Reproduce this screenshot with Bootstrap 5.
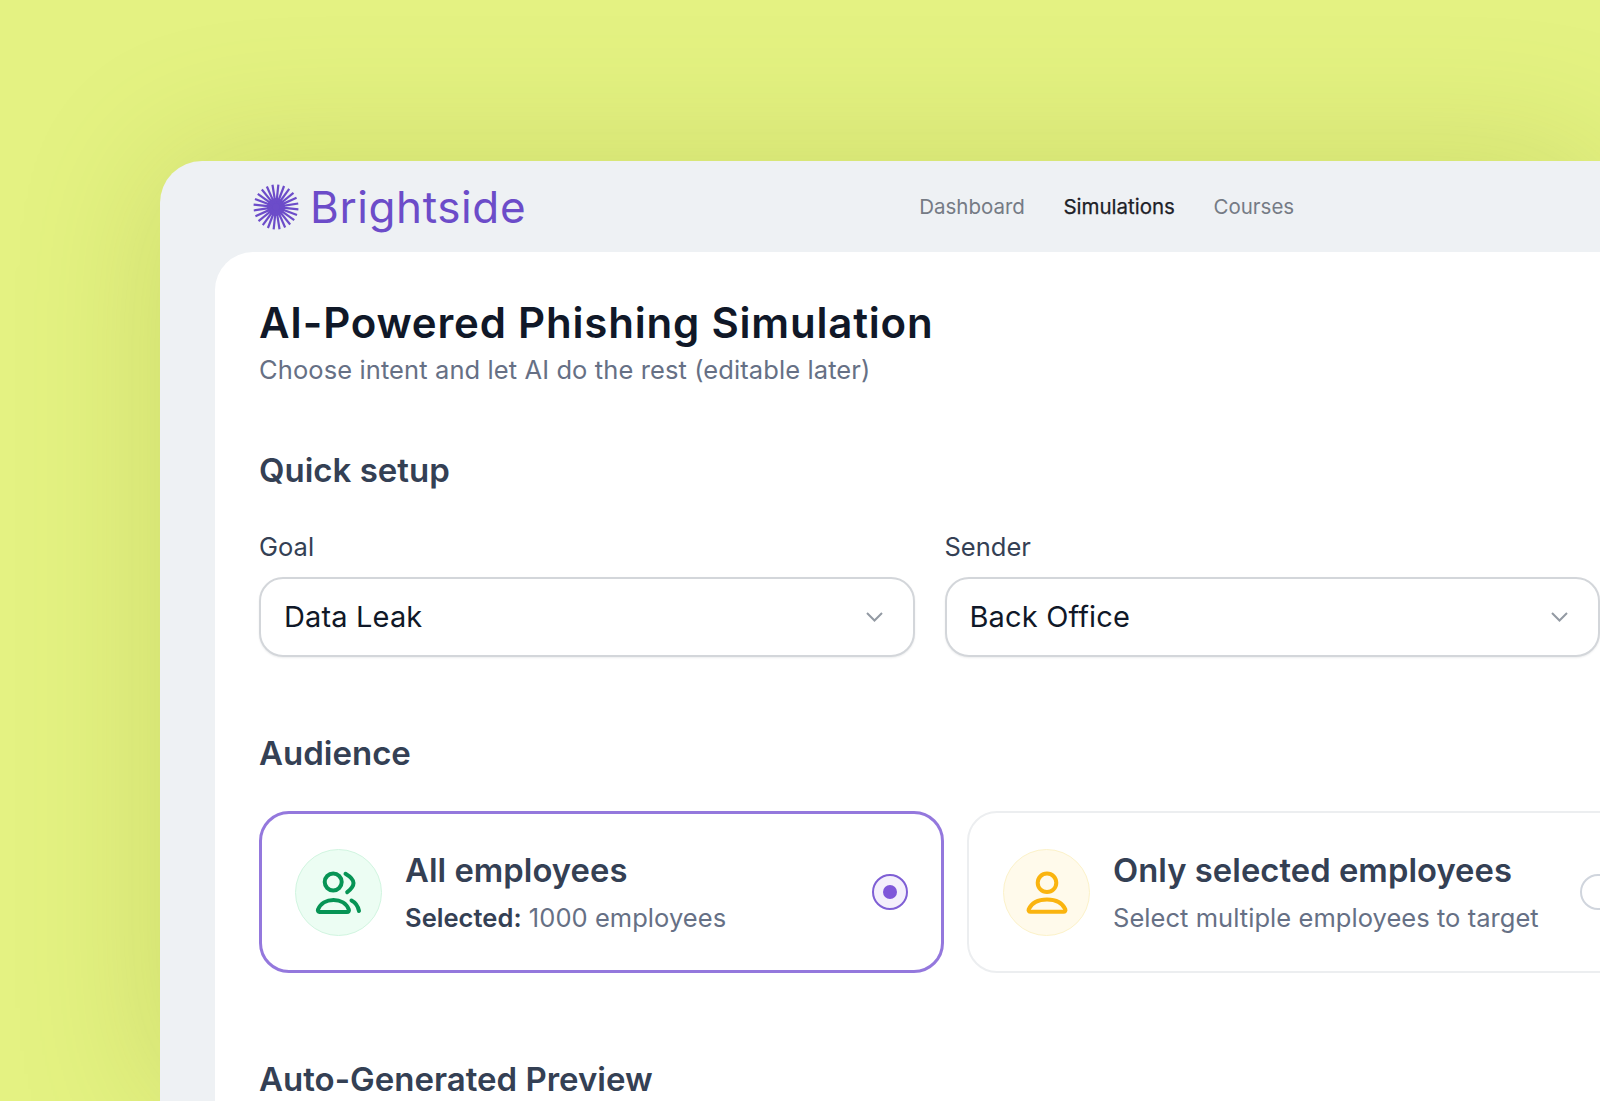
<!DOCTYPE html>
<html lang="en">
<head>
<meta charset="UTF-8">
<title>Brightside</title>
<link rel="stylesheet" href="https://cdn.jsdelivr.net/npm/bootstrap@5.3.2/dist/css/bootstrap.min.css">
<style>
    html, body { height: 100%; overflow: hidden; }
    body { background: #e4f282; font-family: Inter, "Liberation Sans", sans-serif; color: #344054; }
    .shell { margin: 161px 0 0 160px; width: 1440px; height: 940px; background: #eef1f4; border-top-left-radius: 42px; box-shadow: 0 0 150px rgba(110, 125, 20, .2); }
    .topbar { height: 91px; padding-left: 93px; }
    .brand-name { font-size: 44px; color: #6c4cc9; line-height: 1; margin-left: 11px; letter-spacing: .6px; }
    .top-links { margin-left: 393px; gap: 38.5px; padding-top: 2px; }
    .top-links a { font-size: 20.5px; color: #757b85; text-decoration: none; }
    .top-links a.active { color: #1d2127; -webkit-text-stroke: .25px #1d2127; }
    .panel { margin-left: 55px; height: 849px; background: #fff; border-top-left-radius: 38px; padding: 45px 0 0 44px; overflow: hidden; }
    .page-title { font-size: 42px; font-weight: 600; color: #101828; line-height: 52px; margin: 0; letter-spacing: .8px; }
    .page-sub { font-size: 25.5px; color: #667085; line-height: 34px; letter-spacing: .1px; margin-top: 4px; }
    .sec-title { font-size: 33px; font-weight: 600; color: #344054; line-height: 40px; margin: 0; }
    .sec-quick { margin-top: 63px; }
    .sec-audience { margin-top: 76px; }
    .sec-preview { margin-top: 86px; }
    .field-row { width: 1341px; gap: 30px; margin-top: 40px; }
    .field-row > div { flex: 1 1 0; }
    .field-label { font-size: 25.5px; color: #344054; line-height: 34px; margin-bottom: 13px; }
    .field-select { height: 80px; font-size: 29px; color: #101828; border: 2px solid #d3d6da; border-radius: 24px; padding: 0 60px 0 23px; box-shadow: 0 1px 2px rgba(16, 24, 40, .08); letter-spacing: .15px;
        background-image: url("data:image/svg+xml,%3csvg xmlns='http://www.w3.org/2000/svg' viewBox='0 0 17 10'%3e%3cpath fill='none' stroke='%23939aa3' stroke-width='2' d='M1 1l7.500 7.500L16 1'/%3e%3c/svg%3e");
        background-size: 17px 10px; background-position: right 30px center; }
    .opt-row { width: 1393px; gap: 23px; margin-top: 38px; }
    .opt-card { flex: 1 1 0; height: 162px; padding: 0 34px; border: 2px solid #eceef0; border-radius: 30px; gap: 23px; }
    .opt-card.selected { border: 3px solid #9478dd; padding: 0 33px; }
    .opt-icon { width: 87px; height: 87px; flex: none; }
    .opt-icon.green { background: #ecfdf3; border: 1px solid #d1f5e0; }
    .opt-icon.yellow { background: #fffaeb; border: 1px solid #fcf2c9; }
    .opt-title { font-size: 32.75px; font-weight: 600; color: #344054; line-height: 42px; letter-spacing: .05px; }
    .opt-sub { font-size: 25.5px; color: #667085; line-height: 34px; margin-top: 10px; letter-spacing: .05px; }
    .opt-sub strong { font-weight: 600; color: #344054; }
    .opt-radio { width: 36px; height: 36px; flex: none; border: 2px solid #d0d5dd; background: #fff; }
    .opt-radio.on { border-color: #7f5fd5; background: #f4effc; }
    .opt-radio.on span { width: 14px; height: 14px; background: #7f56d9; }
</style>
</head>
<body>
<div class="shell">
    <div class="topbar d-flex align-items-center">
        <svg id="logo" width="46" height="46" viewBox="-23 -23 46 46"><circle r="9" fill="#6c4cc9"/></svg>
        <span class="brand-name">Brightside</span>
        <nav class="top-links d-flex">
            <a href="#">Dashboard</a>
            <a href="#" class="active">Simulations</a>
            <a href="#">Courses</a>
        </nav>
    </div>
    <div class="panel">
        <h1 class="page-title">AI-Powered Phishing Simulation</h1>
        <div class="page-sub">Choose intent and let AI do the rest (editable later)</div>

        <h2 class="sec-title sec-quick">Quick setup</h2>
        <div class="field-row d-flex">
            <div>
                <label class="field-label d-block">Goal</label>
                <select class="form-select field-select"><option>Data Leak</option></select>
            </div>
            <div>
                <label class="field-label d-block">Sender</label>
                <select class="form-select field-select"><option>Back Office</option></select>
            </div>
        </div>

        <h2 class="sec-title sec-audience">Audience</h2>
        <div class="opt-row d-flex">
            <div class="opt-card selected d-flex align-items-center">
                <div class="opt-icon green rounded-circle d-flex align-items-center justify-content-center">
                    <svg width="50" height="50" viewBox="0 0 50 50" fill="none" stroke="#079455" stroke-width="4" stroke-linecap="round" stroke-linejoin="round">
                        <circle cx="19.200" cy="15" r="8.500"/>
                        <path d="M31.500 6.800c5 3 8 6 8 9.300s-2.500 6.300-6.300 9.100"/>
                        <path d="M5.500 45h27.500c1.500 0 2.300-1.200 1.800-2.500C32.500 36.500 26.500 33 19.500 33S6.500 36.500 4 42.500c-.5 1.300.3 2.500 1.500 2.500z"/>
                        <path d="M37.500 33.500c3.500 1.800 6.500 5.500 7.500 10.500"/>
                    </svg>
                </div>
                <div class="flex-grow-1">
                    <div class="opt-title">All employees</div>
                    <div class="opt-sub"><strong>Selected:</strong> 1000 employees</div>
                </div>
                <div class="opt-radio on rounded-circle d-flex align-items-center justify-content-center"><span class="rounded-circle d-block"></span></div>
            </div>
            <div class="opt-card d-flex align-items-center">
                <div class="opt-icon yellow rounded-circle d-flex align-items-center justify-content-center">
                    <svg width="50" height="50" viewBox="0 0 50 50" fill="none" stroke="#fab40f" stroke-width="4" stroke-linecap="round" stroke-linejoin="round">
                        <circle cx="25" cy="15.800" r="9.300"/>
                        <path d="M8.500 44.800h33c1.500 0 2.300-1.200 1.800-2.500C40.500 36 33.500 32.500 25 32.500S9.500 36 6.700 42.300c-.5 1.300.3 2.500 1.800 2.500z"/>
                    </svg>
                </div>
                <div class="flex-grow-1">
                    <div class="opt-title">Only selected employees</div>
                    <div class="opt-sub">Select multiple employees to target</div>
                </div>
                <div class="opt-radio rounded-circle"></div>
            </div>
        </div>

        <h2 class="sec-title sec-preview">Auto-Generated Preview</h2>
    </div>
</div>
<script>
    // sunburst rays for the logo
    var logo = document.getElementById("logo");
    for (var i = 0; i < 24; i++) {
        var ray = document.createElementNS("http://www.w3.org/2000/svg", "line");
        ray.setAttribute("y1", "-4");
        ray.setAttribute("y2", "-22.500");
        ray.setAttribute("stroke", "#6c4cc9");
        ray.setAttribute("stroke-width", "2.200");
        ray.setAttribute("transform", "rotate(" + (i * 15 + 6) + ")");
        logo.appendChild(ray);
    }
</script>
</body>
</html>
